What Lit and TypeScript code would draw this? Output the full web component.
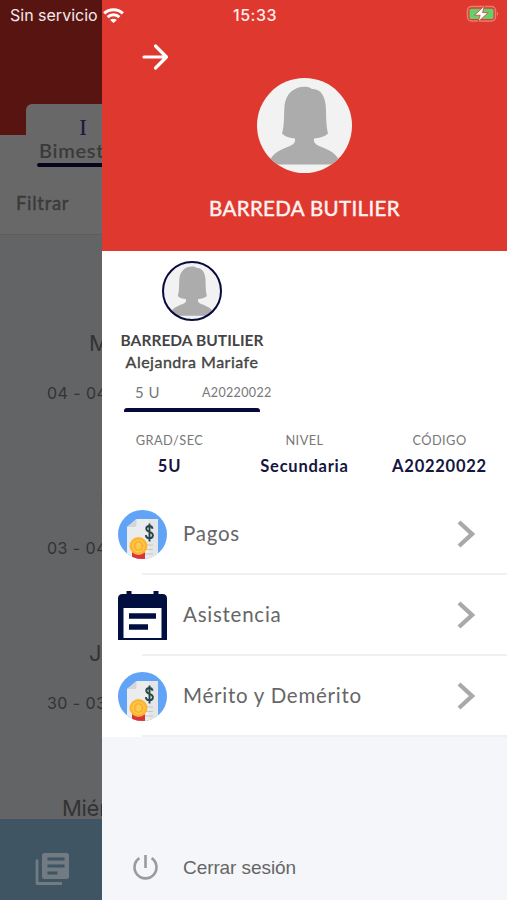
import { LitElement, html, css, svg } from "lit";
import { customElement, property } from "lit/decorators.js";

@customElement("user-avatar")
class UserAvatar extends LitElement {
  static styles = css`
    :host { display: block; }
    svg { display: block; width: 100%; height: 100%; }
  `;
  render() {
    return html`<svg viewBox="0 0 95 95">
      <defs><clipPath id="c"><circle cx="47.5" cy="47.5" r="47.5" /></clipPath></defs>
      <circle cx="47.5" cy="47.5" r="47.5" fill="#f2f2f2" />
      <path clip-path="url(#c)" fill="#acacac"
        d="M47.5 8.800C50.500 8.800 53 9.400 55 11C64 10.300 68 19 68.800 28C69.300 36 68.800 47 71 55.500C68.500 58.500 62 60.200 57 60.500C56.400 64.500 58.500 66.300 62 68C71 71.500 80 74.500 84 86.500H11C15 74.500 24 71.500 33 68C36.500 66.300 38.600 64.500 38 60.500C33 60.200 27.500 58.500 25 55.500C27.500 48 26.800 37 27.500 28C28.500 16 37 8.800 47.500 8.800Z" />
    </svg>`;
  }
}

const moneyIcon = svg`
  <defs><clipPath id="m"><circle cx="24.500" cy="24.500" r="24.500"/></clipPath></defs>
  <g clip-path="url(#m)">
    <rect width="49" height="49" fill="#60a3f7"/>
    <path d="M9 17L18.500 9H40V49H9Z" fill="#ebeced"/>
    <path d="M40 9V49H31V9Z" fill="#e3e5e6"/>
    <path d="M9 17L18.500 9V15Q18.500 17 16.500 17Z" fill="#d3d5d8"/>
    <path d="M26.500 35H35M26.500 39.500H35M26.500 44H35" stroke="#c5c8c9" stroke-width="1.200"/>
    <path d="M14 40H27V49H14Z" fill="#d9343d"/>
    <path d="M34.600 18.700C34.200 16.800 33 16 31.400 16C29.500 16 28.300 17 28.300 18.800C28.300 22.800 34.900 20.800 34.900 25.300C34.900 27.300 33.400 28.300 31.500 28.300C29.500 28.300 28 27.200 27.800 25.200M31.500 13.500V31.500" fill="none" stroke="#26464a" stroke-width="1.900"/>
    <circle cx="20.500" cy="36" r="9" fill="#fdb62f"/>
    <circle cx="20.500" cy="36" r="6.300" fill="#fdca52"/>
    <circle cx="20.500" cy="36" r="5" fill="#f9b02c"/>
    <path d="M20.500 32L23.300 34V38L20.500 40L17.700 38V34Z" fill="#fdca52"/>
  </g>`;

const calendarIcon = svg`
  <path d="M8.500 0H13.500V3H35.500V0H40.500V3H44.500Q49 3 49 7.500V49H0V7.500Q0 3 4.500 3H8.500Z" fill="#010e40"/>
  <rect x="5.500" y="17" width="38" height="30" fill="#fff"/>
  <path d="M11 22.300H38V27.800H11ZM11 33.300H30V38.800H11Z" fill="#010e40"/>`;

@customElement("menu-row")
class MenuRow extends LitElement {
  @property() label = "";
  @property() icon = "money";
  static styles = css`
    :host { display: block; height: 81px; }
    .row { display: flex; align-items: center; height: 79px; box-sizing: border-box; padding: 1px 32px 0 16px; }
    .icon { width: 49px; height: 49px; flex: none; }
    .label { flex: 1; margin: -2px 0 0 16px; font: 20.500px/26px Lato, sans-serif; letter-spacing: 0.75px; color: #666; }
    .chev { width: 18px; height: 28px; }
    .line { height: 2px; margin-left: 40px; background: #eef0f2; }
  `;
  render() {
    return html`<div class="row">
        <svg class="icon" viewBox="0 0 49 49">${this.icon === "money" ? moneyIcon : calendarIcon}</svg>
        <span class="label">${this.label}</span>
        <svg class="chev" viewBox="0 0 18 28"><path d="M2 2L15 14L2 26" fill="none" stroke="#a9a9a9" stroke-width="4.300" /></svg>
      </div>
      <div class="line"></div>`;
  }
}

@customElement("status-bar")
class StatusBar extends LitElement {
  static styles = css`
    :host { display: flex; align-items: center; height: 30px; color: #fff; font-family: Inter, sans-serif; }
    .left, .right { flex: 1; display: flex; align-items: center; }
    .left { padding-left: 10px; }
    .carrier { font-size: 16px; letter-spacing: 0; color: #f3e9e8; width: 93px; white-space: nowrap; }
    .time { font-size: 16px; font-weight: 500; letter-spacing: 0.5px; color: #ffeceb; }
    .right { justify-content: flex-end; padding-right: 7px; }
    svg { display: block; }
    .battery { margin-top: -2px; }
  `;
  render() {
    return html`<div class="left">
        <span class="carrier">Sin servicio</span>
        <svg width="21" height="15" viewBox="0 0 21 15" fill="none" stroke="#fff" stroke-width="3">
          <path d="M1.200 5.400C6.300 .4 14.700 .4 19.800 5.400" /><path d="M4.600 9.100C7.900 6 13.100 6 16.400 9.100" />
          <path d="M10.500 15L7.100 11.900C8.900 10.300 12.100 10.300 13.900 11.900Z" fill="#fff" stroke="none" />
        </svg>
      </div>
      <span class="time">15:33</span>
      <div class="right">
        <svg class="battery" width="34" height="18" viewBox="0 0 34 18">
          <rect x="1.500" y="1.500" width="28" height="14.500" rx="4" fill="none" stroke="#ec7b74" stroke-width="1.500" />
          <rect x="3.500" y="3.700" width="24" height="10.200" rx="1.500" fill="#65cf69" />
          <path d="M31 6.500Q33 8.800 31 11Z" fill="#ef8580" />
          <path d="M18.500 .8L8.500 10.200H14.200L12 17L22.200 7.600H16.500Z" fill="#fff" stroke="#c9443a" stroke-width=".8" />
        </svg>
      </div>`;
  }
}

@customElement("app-root")
class AppRoot extends LitElement {
  static styles = css`
    :host { display: flex; width: 507px; height: 900px; position: relative; overflow: hidden; font-family: Lato, sans-serif; }
    .status { position: absolute; inset: 0 0 auto 0; z-index: 2; }
    .under { width: 102px; flex: none; overflow: hidden; display: flex; flex-direction: column; background: #636466; color: #333; white-space: nowrap; }
    .top { height: 135px; box-sizing: border-box; background: #581411; padding: 104px 0 0 26px; z-index: 1; }
    .tab { width: 114px; height: 65px; background: #686868; border-radius: 6px 0 0 0; display: flex; flex-direction: column; align-items: center; }
    .num { font: 24px/28px "Liberation Serif", serif; color: #1b1a40; margin-top: 9px; height: 24px; }
    .term { align-self: flex-start; font-size: 20px; font-weight: 600; line-height: 24px; letter-spacing: 0.7px; margin: 1px 0 0 13px; color: #3a3a3a; }
    .rule { width: 106px; height: 4px; align-self: flex-start; margin: 1px 0 0 11px; border-radius: 2px; background: #05051f; flex: none; }
    .filter { height: 100px; box-sizing: border-box; background: #686868; border-bottom: 1px solid #5d5d5d; padding: 55px 0 0 16px; font-size: 18.500px; line-height: 26px; letter-spacing: 0.7px; color: #3a3a3a; -webkit-text-stroke: 0.400px #3a3a3a; }
    .days { flex: 1; display: flex; flex-direction: column; padding-top: 94px; font-family: Inter, sans-serif; overflow: hidden; }
    .group { height: 155px; flex: none; }
    .day { font-size: 22px; line-height: 28px; height: 28px; }
    .date { font-size: 16px; line-height: 20px; margin: 26px 0 0 47px; letter-spacing: 0.45px; }
    .d1 { padding-left: 89px; } .d2 { padding-left: 100px; } .d3 { padding-left: 89px; } .d4 { padding-left: 62px; letter-spacing: -0.3px; }
    .nav { height: 81px; flex: none; background: #3f5563; display: flex; align-items: center; padding: 18px 0 0 35px; box-sizing: border-box; }

    .drawer { flex: 1; display: flex; flex-direction: column; background: #f5f6fa; }
    .head { height: 251px; box-sizing: border-box; background: #df382f; display: flex; flex-direction: column; align-items: center; padding-top: 43px; }
    .arrow { align-self: flex-start; margin-left: 40px; width: 27px; height: 28px; }
    .big { width: 95px; height: 95px; margin-top: 7px; }
    .family { font-size: 20.500px; line-height: 26px; margin-top: 22px; letter-spacing: 0.35px; color: #fff3f2; -webkit-text-stroke: 0.450px #fff3f2; white-space: nowrap; }
    .body { background: #fff; height: 243px; box-sizing: border-box; padding-top: 10px; }
    .student { width: 180px; display: flex; flex-direction: column; align-items: center; white-space: nowrap; color: #444; }
    .photo { position: relative; width: 60px; height: 60px; }
    .photo::after { content: ""; position: absolute; inset: 0; border: 2.500px solid #060b3d; border-radius: 50%; }
    .last { font-size: 15.500px; font-weight: 700; line-height: 22px; margin-top: 8px; letter-spacing: 0.05px; }
    .first { font-size: 16px; line-height: 22px; letter-spacing: 0.5px; -webkit-text-stroke: 0.400px #444; }
    .meta { align-self: flex-start; display: flex; align-items: center; height: 30px; margin-top: 4px; padding-left: 33px; color: #777; }
    .meta .grade { width: 67px; font-size: 15px; letter-spacing: 0.5px; }
    .meta .code { font-size: 12.500px; letter-spacing: 0.35px; }
    .underline { height: 4px; width: 136px; border-radius: 3px 3px 0 0; background: #07093a; margin-top: 1px; }
    .info { display: grid; grid-template-columns: repeat(3, 135px); text-align: center; margin-top: 18px; }
    .key { font-size: 12.800px; line-height: 20px; color: #777; letter-spacing: 0.45px; }
    .val { font-size: 16.500px; font-weight: 700; line-height: 22px; margin-top: 5px; color: #14163f; letter-spacing: 0.75px; }
    .menu { background: #fff; }
    .logout { flex: 1; display: flex; align-items: flex-end; padding: 0 0 19px 30px; }
    .logout span { font: 19px/26px "Liberation Sans", sans-serif; color: #666; margin-left: 24px; white-space: nowrap; letter-spacing: -0.080px; }
  `;
  group(n: number, day: string, date: string) {
    return html`<div class="group"><div class="day d${n}">${day}</div><div class="date">${date}</div></div>`;
  }
  info(key: string, val: string) {
    return html`<div><div class="key">${key}</div><div class="val">${val}</div></div>`;
  }
  render() {
    return html`
      <div class="under">
        <div class="top">
          <div class="tab"><div class="num">I</div><div class="term">Bimestre</div><div class="rule"></div></div>
        </div>
        <div class="filter">Filtrar</div>
        <div class="days">
          ${this.group(1, "M", "04 - 04")}
          ${this.group(2, "L", "03 - 04")}
          ${this.group(3, "J", "30 - 03")}
          ${this.group(4, "Miér", "")}
        </div>
        <div class="nav">
          <svg width="34" height="34" viewBox="0 0 34 34">
            <path d="M2 7.500V31.500H27" fill="none" stroke="#717b81" stroke-width="2.800" stroke-linejoin="round" />
            <rect x="7" y="1" width="27" height="26" rx="2.500" fill="#717b81" />
            <path d="M12.500 7H29.500M12.500 14H29.500M12.500 21H22.500" stroke="#3f5563" stroke-width="2.800" />
          </svg>
        </div>
      </div>
      <div class="drawer">
        <div class="head">
          <svg class="arrow" viewBox="0 0 27 28" fill="none" stroke="#fff" stroke-width="3.200" stroke-linecap="round" stroke-linejoin="round">
            <path d="M2 14H24.500M13.500 3L24.500 14L13.500 25" />
          </svg>
          <user-avatar class="big"></user-avatar>
          <div class="family">BARREDA BUTILIER</div>
        </div>
        <div class="body">
          <div class="student">
            <div class="photo"><user-avatar></user-avatar></div>
            <div class="last">BARREDA BUTILIER</div>
            <div class="first">Alejandra Mariafe</div>
            <div class="meta"><span class="grade">5 U</span><span class="code">A20220022</span></div>
            <div class="underline"></div>
          </div>
          <div class="info">
            ${this.info("GRAD/SEC", "5U")}${this.info("NIVEL", "Secundaria")}${this.info("CÓDIGO", "A20220022")}
          </div>
        </div>
        <div class="menu">
          <menu-row label="Pagos"></menu-row>
          <menu-row label="Asistencia" icon="calendar"></menu-row>
          <menu-row label="Mérito y Demérito"></menu-row>
        </div>
        <div class="logout">
          <svg width="27" height="27" viewBox="0 0 27 27" fill="none" stroke="#9a9b9e" stroke-width="2.600">
            <path d="M13.500 1V14M7.400 4.200A11 11 0 1 0 19.600 4.200" />
          </svg>
          <span>Cerrar sesión</span>
        </div>
      </div>
      <status-bar class="status"></status-bar>
    `;
  }
}
